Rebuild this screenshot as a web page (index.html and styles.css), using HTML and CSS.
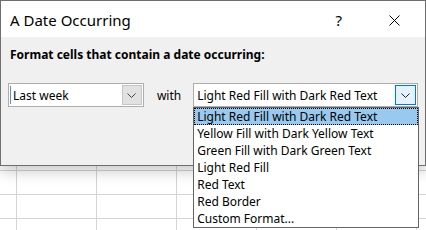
FILE: index.html
```html
<!DOCTYPE html>
<html lang="en">
<head>
  <meta charset="UTF-8" />
  <title>A Date Occurring</title>
  <link rel="stylesheet" href="styles.css">
</head>
<body>

<div class="dialog">
  <div class="titlebar">
    <span class="title">A Date Occurring</span>
    <span class="help">?</span>
    <span class="close">
      <svg width="11" height="11" viewBox="0 0 11 11"><path d="M0.5 0.5 L10.5 10.5 M10.5 0.5 L0.5 10.5" stroke="#000" stroke-width="1" fill="none"/></svg>
    </span>
  </div>

  <div class="content">
    <div class="prompt">Format cells that contain a date occurring:</div>

    <div class="row">
      <div class="combo combo-date">
        <span class="caret"></span>
        <span class="value">Last week</span>
        <span class="drop">
          <svg width="9" height="5" viewBox="0 0 9 5"><path d="M0.5 0.5 L4.5 4.5 L8.5 0.5" stroke="#444" stroke-width="1" fill="none"/></svg>
        </span>
      </div>

      <span class="with">with</span>

      <div class="combo combo-format">
        <span class="value">Light Red Fill with Dark Red Text</span>
        <span class="drop drop-active">
          <svg width="9" height="5" viewBox="0 0 9 5"><path d="M0.5 0.5 L4.5 4.5 L8.5 0.5" stroke="#222" stroke-width="1" fill="none"/></svg>
        </span>

        <ul class="list">
          <li class="selected">Light Red Fill with Dark Red Text</li>
          <li>Yellow Fill with Dark Yellow Text</li>
          <li>Green Fill with Dark Green Text</li>
          <li>Light Red Fill</li>
          <li>Red Text</li>
          <li>Red Border</li>
          <li>Custom Format...</li>
        </ul>
      </div>
    </div>
  </div>
</div>

</body>
</html>
```

FILE: styles.css
```css
body {
  margin: 0;
  font-family: 'Noto Sans', 'Open Sans', sans-serif;
  font-size: 12px;
  color: #000;
  background-color: #fff;
  background-image:
    linear-gradient(to right, #d4d4d4 1px, transparent 1px),
    linear-gradient(to bottom, #d4d4d4 1px, transparent 1px);
  background-size: 80px 100%, 100% 24px;
  background-position: 16px 0, 0 2px;
  height: 230px;
  overflow: hidden;
}

.dialog {
  width: 426px;
  height: 166px;
  box-sizing: border-box;
  border: 1px solid #6e6e6e;
  background: #f0f0f0;
  box-shadow: 0 5px 14px rgba(0, 0, 0, 0.22);
  position: relative;
}

.titlebar {
  height: 36px;
  background: #fff;
  display: flex;
  align-items: center;
  padding-left: 9px;
}

.title {
  font-size: 15px;
  flex: 1;
  padding-top: 2px;
}

.help {
  font-size: 15px;
  margin-right: 47px;
  padding-top: 2px;
}

.close {
  display: flex;
  margin-right: 25px;
  padding-top: 2px;
}

.content {
  padding: 10px 7px 0 7px;
}

.prompt {
  font-weight: bold;
  line-height: 16px;
  margin-left: 2px;
}

.row {
  display: flex;
  align-items: center;
  margin-top: 20px;
}

.combo {
  height: 24px;
  box-sizing: border-box;
  border: 1px solid #adadad;
  background: #fff;
  display: flex;
  align-items: center;
  position: relative;
}

.combo-date {
  width: 136px;
}

.combo-format {
  width: 225px;
}

.caret {
  width: 1px;
  height: 18px;
  background: #5a8fd8;
  margin-left: 1px;
}

.value {
  flex: 1;
  padding-left: 2px;
  white-space: nowrap;
}

.combo-format .value {
  padding-left: 3px;
}

.drop {
  width: 20px;
  height: 20px;
  box-sizing: border-box;
  margin-right: 1px;
  border: 1px solid #c6c6c6;
  background: #e1e1e1;
  display: flex;
  align-items: center;
  justify-content: center;
}

.drop-active {
  width: 21px;
  border-color: #0078d7;
  background: #e5f1fb;
}

.with {
  margin: 0 12px 0 13px;
}

.list {
  position: absolute;
  top: 23px;
  left: -1px;
  width: 226px;
  box-sizing: border-box;
  margin: 0;
  padding: 0;
  list-style: none;
  border: 1px solid #646464;
  background: #fff;
}

.list li {
  height: 17px;
  line-height: 17px;
  padding-left: 3px;
  white-space: nowrap;
  box-sizing: border-box;
}

.list li.selected {
  background: #99c9ef;
  outline: 1px dotted #000;
  outline-offset: -1px;
}
```
